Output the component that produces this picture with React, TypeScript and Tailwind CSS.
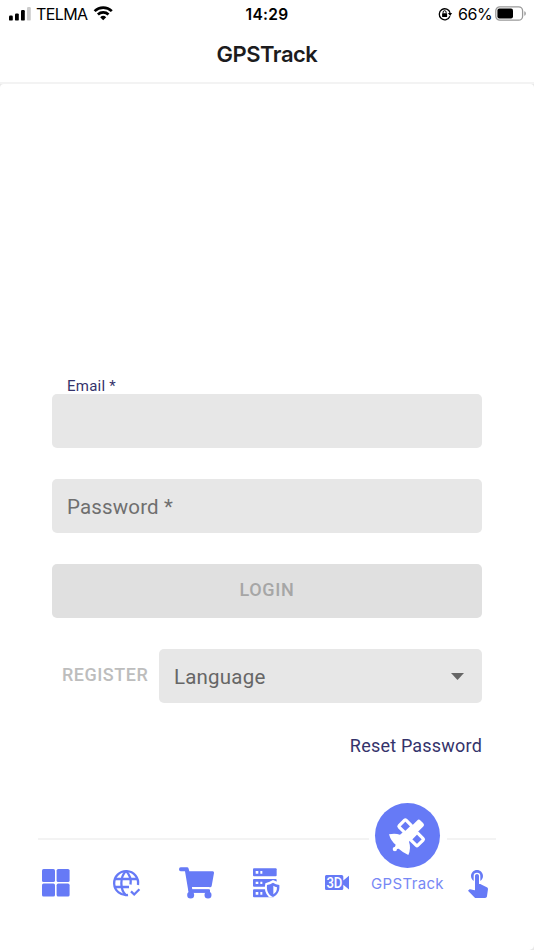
import React from "react";
import { MdTouchApp } from "react-icons/md";

const svgBase = "block shrink-0 overflow-visible";

function StatusBar() {
  return (
    <div className="flex h-7 items-center justify-between pl-[9px] pr-[7px] font-['Inter',sans-serif] text-black">
      <div className="flex w-[180px] items-center">
        <svg className={`${svgBase} -mt-px`} width="22" height="15" viewBox="0 0 22 15">
          <rect x="0" y="9.6" width="3.8" height="5" rx="1.2" />
          <rect x="6" y="7.4" width="3.8" height="7.2" rx="1.2" />
          <rect x="12" y="4" width="3.8" height="10.6" rx="1.2" />
          <rect x="18" y="1" width="3.8" height="13.6" rx="1.2" fill="#ccc" />
        </svg>
        <span className="ml-[5px] w-[57px] whitespace-nowrap text-[16px] leading-7 tracking-[-0.6px]">TELMA</span>
        <svg className={`${svgBase} -mt-[3px]`} width="21" height="16" viewBox="0 0 21 16" fill="none" stroke="#000" strokeWidth="2.7">
          <path d="M1.6 6.1a12.4 12.4 0 0 1 17.2 0" />
          <path d="M4.9 9.5a7.7 7.7 0 0 1 10.6 0" />
          <path d="M7.2 12.2a4.4 4.4 0 0 1 6 0L10.2 15.2z" fill="#000" stroke="none" />
        </svg>
      </div>
      <span className="-ml-[2px] pt-px text-[15.5px] font-semibold leading-7 tracking-[0.3px]">14:29</span>
      <div className="flex w-[180px] items-center justify-end">
        <svg className={svgBase} width="14" height="14" viewBox="0 0 14 14" fill="none" stroke="#000" strokeWidth="1.3">
          <path d="M11.9 9.3a5.5 5.5 0 1 1 .2-3.4" />
          <path d="M9.9 6h4.2L12.2 9z" fill="#000" stroke="none" />
          <rect x="4.1" y="6.2" width="5" height="3.7" rx=".5" fill="#000" stroke="none" />
          <path d="M5.1 6.4V5.2a1.5 1.5 0 0 1 3 0v1.2" strokeWidth="1" />
        </svg>
        <span className="ml-[6px] w-[33px] whitespace-nowrap text-[16px] leading-7 tracking-[-0.45px]">66%</span>
        <svg className={`${svgBase} -mt-[2px] ml-1`} width="32" height="15" viewBox="0 0 32 15">
          <rect x=".8" y=".8" width="26.8" height="13.4" rx="4" fill="none" stroke="#999" strokeWidth="1.3" />
          <rect x="2.4" y="2.5" width="15.6" height="10" rx="2" />
          <path d="M29.3 5.2c2 .5 2 4.1 0 4.6z" fill="#999" />
        </svg>
      </div>
    </div>
  );
}

function GridIcon() {
  return (
    <svg className={svgBase} width="28" height="28" viewBox="0 0 28 28" fill="#667af6">
      <rect x="0" y="0" width="13" height="13" rx="1.6" />
      <rect x="14.6" y="0" width="13" height="13" rx="1.6" />
      <rect x="0" y="14.6" width="13" height="13" rx="1.6" />
      <rect x="14.6" y="14.6" width="13" height="13" rx="1.6" />
    </svg>
  );
}

function GlobeIcon() {
  return (
    <svg className={svgBase} width="27" height="27" viewBox="0 0 27 27" fill="none" stroke="#667af6" strokeWidth="2.3">
      <path d="M15 25A12 12 0 1 1 25 15" />
      <path d="M13 1C6.8 7 6.8 19.5 13 25.4M13 1c3.8 3.6 5.2 8.6 4.5 13.5M2 9h22M2 17h14" />
      <path d="m18 21.4 3.2 3.1 5.2-5.2" />
    </svg>
  );
}

function CartIcon() {
  return (
    <svg className={svgBase} width="35" height="32" viewBox="0 0 105 96" fill="#667af6">
      <path d="M5 1h19q4 0 5 4l2 8h70q5 0 4 5l-7 39q-1 4-5 4H39l1 6h49q4 0 4 5t-4 5H34q-5 0-6-5L18 13H5q-5 0-5-6t5-6z" />
      <path d="M29 68h64v9H29z" />
      <circle cx="35" cy="84" r="10.5" />
      <circle cx="87" cy="84" r="10.5" />
      <path d="M39 62h52" stroke="#fff" strokeWidth="4" />
    </svg>
  );
}

function ServerIcon() {
  return (
    <svg className={svgBase} width="27" height="30" viewBox="0 0 81 90" fill="#667af6">
      <rect x="0" y="1" width="71" height="24" rx="3" />
      <rect x="0" y="33" width="71" height="23" rx="3" />
      <rect x="0" y="64" width="64" height="24" rx="3" />
      <g fill="#fff">
        <path d="M8 9h8v8H8zM22 9h6v8h-6zM8 41h8v7H8zM22 41h6v7h-6zM8 72h8v8H8zM22 72h6v8h-6z" />
        <path d="M60 36q12 6 26 8v44H48Q31 72 37 46q14-4 23-10z" />
      </g>
      <path d="M60 44q8 6 19 7c2 19-6 30-19 36C47 81 40 70 42 51q10-1 18-7z" />
      <path d="M61 53q5 4 11 5c0 11-4 17-11 21z" fill="#fff" />
    </svg>
  );
}

function Video3dIcon() {
  return (
    <svg className={`${svgBase} -mt-[2px]`} width="24" height="17" viewBox="0 0 24 17">
      <path d="M1.3 1h15.4Q18.3 1 18.3 2.5v4L24 1.8v13.6l-5.7-4.7v3.8q0 1.5-1.6 1.5H1.3Q0 16 0 14.5v-12Q0 1 1.3 1z" fill="#667af6" />
      <text x="1.4" y="13.7" fill="#fff" fontFamily="Roboto, sans-serif" fontSize="14.5" fontWeight="500" textLength="16" lengthAdjust="spacingAndGlyphs">3D</text>
    </svg>
  );
}

function SatelliteIcon() {
  return (
    <svg className={svgBase} width="38" height="38" viewBox="0 0 114 114" fill="#fff">
      <g fill="none" stroke="#fff" strokeWidth="9.5" strokeLinejoin="round">
        <rect x="34.5" y="13.5" width="29" height="29" rx="3" transform="rotate(-45 49 28)" />
        <rect x="69.5" y="52.5" width="29" height="29" rx="3" transform="rotate(-45 84 67)" />
      </g>
      <rect x="46" y="24" width="62" height="26" rx="7" transform="rotate(-45 76 37)" />
      <path d="M0 52q18-4 33 1l13-11 22 23-8 9q7 20-2 40-17-8-29-19l-5 1q0 7-6 7-7 0-7-7 0-6 7-7l2-6Q6 73 0 52z" />
    </svg>
  );
}

function BottomNav() {
  return (
    <nav className="mt-[45px] h-[147px] w-full pl-[42px]">
      <div className="flex h-[65px] items-center">
        <div className="-ml-1 mt-[7px] h-[2px] w-[331px] bg-[#f3f3f3]" />
        <div className="ml-[6px] mr-[7px] flex h-[65px] w-[65px] shrink-0 items-center justify-center rounded-full bg-[#667af6]">
          <SatelliteIcon />
        </div>
        <div className="mt-[7px] h-[2px] w-[49px] bg-[#f3f3f3]" />
      </div>
      <div className="mt-[-1px] flex h-[32px] items-center">
        <GridIcon />
        <div className="ml-[43px]"><GlobeIcon /></div>
        <div className="ml-[39px]"><CartIcon /></div>
        <div className="ml-[39px]"><ServerIcon /></div>
        <div className="ml-[45px]"><Video3dIcon /></div>
        <span className="ml-[22px] w-[72px] whitespace-nowrap pt-[2px] font-['Inter',sans-serif] text-[15px] leading-8 tracking-[0.35px] text-[#7788f5]">GPSTrack</span>
        <MdTouchApp className="ml-[25px] mt-[2px] block h-[28px] w-[20px] shrink-0 text-[#667af6]" viewBox="4.75 3 15 21" />
      </div>
    </nav>
  );
}

export default function App() {
  return (
    <div className="bg-[#e8e8e8]">
      <div className="flex h-[950px] w-[534px] flex-col overflow-hidden rounded-br-[5px] bg-white font-['Roboto',sans-serif]">
        <StatusBar />
        <header className="flex h-[54px] items-center justify-center font-['Inter',sans-serif]">
          <h1 className="-mt-px text-[22px] font-[560] tracking-[-0.5px] text-[#1c1c1e]">GPSTrack</h1>
        </header>
        <div className="h-[20px] shrink-0 bg-[linear-gradient(#e8e8e8,#e8e8e8)] bg-[length:100%_4px] bg-[position:0_2px] bg-no-repeat">
          <div className="h-[2px] bg-[#f3f3f3]" />
          <div className="h-[18px] rounded-t-[4px] bg-white" />
        </div>
        <main className="mx-[52px] mt-[275px] w-[430px]">
          <label className="block h-[17px] pl-[15px] text-[15px] leading-[18px] tracking-[0.25px] text-[#34336b]">Email *</label>
          <div className="h-[54px] rounded-[5px] bg-[#e7e7e7]" />
          <div className="mt-[31px] flex h-[54px] items-center rounded-[5px] bg-[#e7e7e7] pl-[15px] pt-[2px] text-[20.5px] tracking-[0.15px] text-[#6f6f6f]">Password *</div>
          <button className="mt-[31px] flex h-[54px] w-full items-center justify-center rounded-[5px] bg-[#e0e0e0] pb-[3px] text-[18px] font-medium tracking-[0.7px] text-[#a6a6a6]">LOGIN</button>
          <div className="mt-[31px] flex h-[54px] items-center">
            <button className="w-[107px] whitespace-nowrap pb-[3px] pl-[10px] text-left text-[18px] font-medium tracking-[0.5px] text-[#bdbdbd]">REGISTER</button>
            <div className="flex h-[54px] flex-1 items-center justify-between rounded-[5px] bg-[#e7e7e7] pl-[15px] pr-[18px] pt-[2px] text-[20.5px] tracking-[0.2px] text-[#666]">
              <span>Language</span>
              <svg className={`${svgBase} -mt-px`} width="13" height="7" viewBox="0 0 13 7" fill="#666"><path d="M0 0h13L6.5 7z" /></svg>
            </div>
          </div>
          <div className="mt-[31px] flex h-[24px] items-center justify-end whitespace-nowrap pb-[2px] text-[18px] tracking-[0.2px] text-[#34336b]">Reset Password</div>
        </main>
        <BottomNav />
      </div>
    </div>
  );
}
